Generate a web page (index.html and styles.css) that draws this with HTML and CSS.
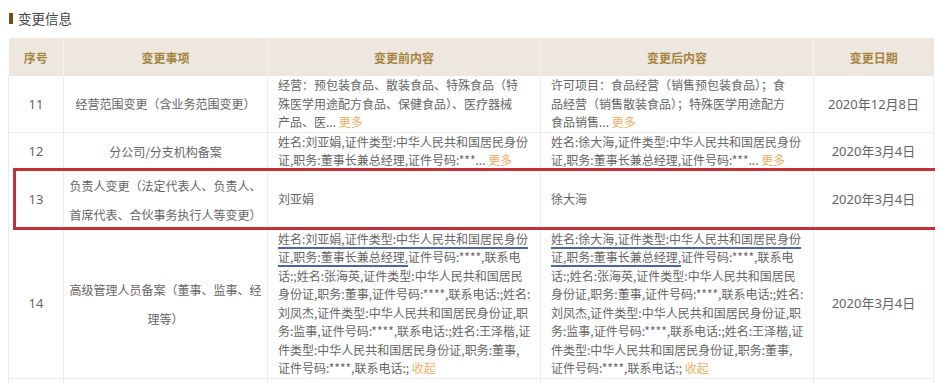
FILE: index.html
```html
<!DOCTYPE html>
<html lang="zh-CN">
<head>
<meta charset="utf-8">
<title>变更信息</title>
<link rel="stylesheet" href="styles.css">
</head>
<body>
<section class="change-info">
  <h3 class="section-title">变更信息</h3>
  <div class="table-wrap">
    <table class="change-table">
      <colgroup>
        <col class="c-seq"><col class="c-item"><col class="c-before"><col class="c-after"><col class="c-date">
      </colgroup>
      <thead>
        <tr><th>序号</th><th>变更事项</th><th>变更前内容</th><th>变更后内容</th><th>变更日期</th></tr>
      </thead>
      <tbody>
        <tr>
          <td class="seq">11</td>
          <td class="item">经营范围变更（含业务范围变更）</td>
          <td class="content">经营：预包装食品、散装食品、特殊食品（特<br>殊医学用途配方食品、保健食品）、医疗器械<br>产品、医... <a class="toggle">更多</a></td>
          <td class="content">许可项目：食品经营（销售预包装食品）；食<br>品经营（销售散装食品）；特殊医学用途配方<br>食品销售... <a class="toggle">更多</a></td>
          <td class="date">2020年12月8日</td>
        </tr>
        <tr>
          <td class="seq">12</td>
          <td class="item">分公司/分支机构备案</td>
          <td class="content">姓名:刘亚娟,证件类型:中华人民共和国居民身份<br>证,职务:董事长兼总经理,证件号码:***... <a class="toggle">更多</a></td>
          <td class="content">姓名:徐大海,证件类型:中华人民共和国居民身份<br>证,职务:董事长兼总经理,证件号码:***... <a class="toggle">更多</a></td>
          <td class="date">2020年3月4日</td>
        </tr>
        <tr class="marked">
          <td class="seq">13</td>
          <td class="item">负责人变更（法定代表人、负责人、首席代表、合伙事务执行人等变更）</td>
          <td class="content">刘亚娟</td>
          <td class="content">徐大海</td>
          <td class="date">2020年3月4日</td>
        </tr>
        <tr>
          <td class="seq">14</td>
          <td class="item">高级管理人员备案（董事、监事、经理等）</td>
          <td class="content"><span class="mark">姓名:刘亚娟,证件类型:中华人民共和国居民身份<br>证,职务:董事长兼总经理,</span>证件号码:****,联系电<br>话:;姓名:张海英,证件类型:中华人民共和国居民<br>身份证,职务:董事,证件号码:****,联系电话:;姓名:<br>刘凤杰,证件类型:中华人民共和国居民身份证,职<br>务:监事,证件号码:****,联系电话:;姓名:王泽楷,证<br>件类型:中华人民共和国居民身份证,职务:董事,<br>证件号码:****,联系电话:; <a class="toggle">收起</a></td>
          <td class="content"><span class="mark">姓名:徐大海,证件类型:中华人民共和国居民身份<br>证,职务:董事长兼总经理,</span>证件号码:****,联系电<br>话:;姓名:张海英,证件类型:中华人民共和国居民<br>身份证,职务:董事,证件号码:****,联系电话:;姓名:<br>刘凤杰,证件类型:中华人民共和国居民身份证,职<br>务:监事,证件号码:****,联系电话:;姓名:王泽楷,证<br>件类型:中华人民共和国居民身份证,职务:董事,<br>证件号码:****,联系电话:; <a class="toggle">收起</a></td>
          <td class="date">2020年3月4日</td>
        </tr>
        <tr>
          <td class="seq">15</td>
          <td class="item">高级管理人员备案（董事、监事、经理等）</td>
          <td class="content">姓名:罗小丽,证件类型:中华人民共和国居民身份<br>证,职务:董事,证件号码:****,联系电话:;</td>
          <td class="content">姓名:罗小丽,证件类型:中华人民共和国居民身份<br>证,职务:董事,证件号码:****,联系电话:;</td>
          <td class="date">2019年6月12日</td>
        </tr>
      </tbody>
    </table>
    <div class="highlight"></div>
  </div>
</section>
</body>
</html>
```

FILE: styles.css
```css
html, body {
  background: #ffffff;
}

body {
  margin: 8px;
  font-family: "Noto Sans CJK SC", "Microsoft YaHei", sans-serif;
  color: #666666;
  overflow: hidden;
}

.change-info {
  width: 925px;
}

.section-title {
  display: flex;
  align-items: center;
  gap: 5px;
  margin: 0 0 10px 0;
  height: 20px;
  font-size: 13.5px;
  font-weight: 400;
  color: #444444;
  line-height: 20px;
}

.section-title::before {
  content: "";
  display: block;
  width: 4px;
  height: 11px;
  margin-left: 1px;
  background: #7a4b1f;
}

.table-wrap {
  position: relative;
}

.change-table {
  width: 925px;
  table-layout: fixed;
  border-collapse: collapse;
  font-size: 12px;
}

.c-seq { width: 55px; }
.c-item { width: 204px; }
.c-before { width: 273px; }
.c-after { width: 273px; }
.c-date { width: 120px; }

.change-table th {
  height: 38px;
  padding: 0;
  background: #ede7df;
  color: #a5843e;
  font-weight: 700;
  font-size: 12px;
  text-align: center;
  border: 1px solid #f6f2ec;
  border-top: 0;
  border-bottom: 0;
}

.change-table th:first-child { border-left: 0; }
.change-table th:last-child { border-right: 0; }

.change-table td {
  padding: 0;
  border: 1px solid #ececec;
  line-height: 18.5px;
  vertical-align: middle;
}

.change-table tbody tr:first-child td { border-top: 0; }

.seq {
  text-align: center;
  font-family: "Noto Sans", "Noto Sans CJK SC", sans-serif;
  font-size: 13px;
}

.item {
  text-align: center;
  line-height: 29px !important;
  padding: 0 5px !important;
}

.content {
  white-space: nowrap;
  padding: 0 8px 0 10px !important;
  text-align: left;
  overflow: hidden;
}

.date {
  text-align: center;
  font-family: "Noto Sans", "Noto Sans CJK SC", sans-serif;
  font-size: 13px;
}

.toggle {
  color: #f2ae62;
  text-decoration: none;
  cursor: pointer;
}

.mark {
  text-decoration: underline;
  text-decoration-color: #4d64ad;
  text-decoration-thickness: 2px;
  text-underline-offset: 3px;
}

.highlight {
  position: absolute;
  left: 5px;
  top: 130px;
  width: 920px;
  height: 56px;
  border: 3px solid #c3303a;
  pointer-events: none;
}
```
